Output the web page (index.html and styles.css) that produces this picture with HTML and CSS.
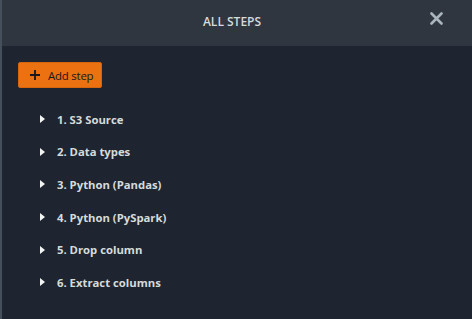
FILE: index.html
```html
<!DOCTYPE html>
<html lang="en">
<head>
  <meta charset="UTF-8" />
  <title>All steps</title>
  <link rel="stylesheet" href="styles.css">
</head>
<body>
  <div class="panel">
    <header class="panel-header">
      <h2>ALL STEPS</h2>
      <button class="close-btn" aria-label="Close">
        <svg width="13" height="13" viewBox="0 0 13 13"><path d="M1.5 1.5 L11.5 11.5 M11.5 1.5 L1.5 11.5" stroke="#aab4bd" stroke-width="2.6" stroke-linecap="round"/></svg>
      </button>
    </header>

    <div class="panel-body">
      <button class="add-btn">
        <svg width="12" height="12" viewBox="0 0 12 12"><path d="M6 1 V11 M1 6 H11" stroke="#16191f" stroke-width="1.8"/></svg>
        Add step
      </button>

      <ul class="steps">
        <li><span class="caret"></span>1. S3 Source</li>
        <li><span class="caret"></span>2. Data types</li>
        <li><span class="caret"></span>3. Python (Pandas)</li>
        <li><span class="caret"></span>4. Python (PySpark)</li>
        <li><span class="caret"></span>5. Drop column</li>
        <li><span class="caret"></span>6. Extract columns</li>
      </ul>
    </div>
  </div>
</body>
</html>
```

FILE: styles.css
```css
html, body {
  margin: 0;
  height: 100%;
}

body {
  font-family: 'Open Sans', 'Noto Sans', sans-serif;
  background: #1e2530;
}

.panel {
  height: 100%;
  border-left: 2px solid #454f5b;
  box-sizing: border-box;
  display: flex;
  flex-direction: column;
}

.panel-header {
  height: 46px;
  background: #2f3640;
  display: flex;
  align-items: center;
  justify-content: center;
  position: relative;
}

.panel-header h2 {
  margin: 0 0 4px -10px;
  font-size: 12px;
  font-weight: 600;
  color: #d5dbdb;
}

.close-btn {
  position: absolute;
  right: 29px;
  top: 12px;
  background: none;
  border: none;
  padding: 0;
  width: 13px;
  height: 13px;
  display: flex;
}

.panel-body {
  padding: 16px 0 0 16px;
}

.add-btn {
  display: flex;
  align-items: center;
  gap: 7px;
  height: 26px;
  padding: 0 8px 0 10px;
  background: #ec7211;
  border: 1px solid #d7650e;
  border-radius: 2px;
  color: #16191f;
  font-family: inherit;
  font-size: 11.4px;
  font-weight: 500;
  letter-spacing: -0.2px;
}

.steps {
  list-style: none;
  margin: 15px 0 0;
  padding: 0 0 0 22px;
}

.steps li {
  display: flex;
  align-items: center;
  height: 32.6px;
  color: #d5dbdb;
  font-size: 11.3px;
  font-weight: 700;
}

.caret {
  width: 0;
  height: 0;
  border-top: 4.5px solid transparent;
  border-bottom: 4.5px solid transparent;
  border-left: 5px solid #f2f3f3;
  margin-right: 12px;
}
```
